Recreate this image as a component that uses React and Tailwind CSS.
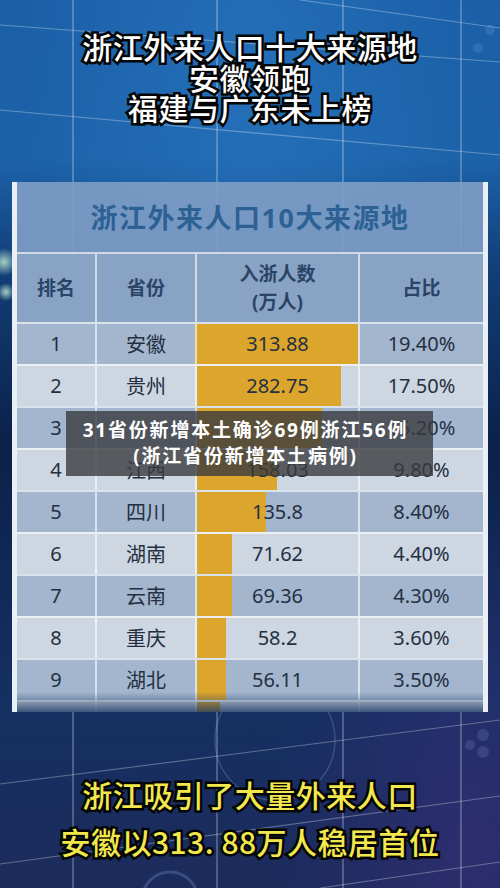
import React from "react";

const rows = [
  { rank: "1", prov: "安徽", num: "313.88", pct: "19.40%", bar: 161 },
  { rank: "2", prov: "贵州", num: "282.75", pct: "17.50%", bar: 144 },
  { rank: "3", prov: "", num: "", pct: "15.20%", bar: 125 },
  { rank: "4", prov: "江西", num: "158.03", pct: "9.80%", bar: 80 },
  { rank: "5", prov: "四川", num: "135.8", pct: "8.40%", bar: 69 },
  { rank: "6", prov: "湖南", num: "71.62", pct: "4.40%", bar: 35 },
  { rank: "7", prov: "云南", num: "69.36", pct: "4.30%", bar: 35 },
  { rank: "8", prov: "重庆", num: "58.2", pct: "3.60%", bar: 29 },
  { rank: "9", prov: "湖北", num: "56.11", pct: "3.50%", bar: 29 },
  { rank: "", prov: "", num: "", pct: "", bar: 23 },
];

const Backdrop = () => (
  <svg
    className="absolute inset-0"
    width="500"
    height="888"
    viewBox="0 0 500 888"
  >
    <defs>
      <linearGradient id="bg" x1="0" y1="0" x2="0" y2="1">
        <stop offset="0" stopColor="#1b5fa7" />
        <stop offset="0.18" stopColor="#1c62a9" />
        <stop offset="0.3" stopColor="#123f78" />
        <stop offset="0.5" stopColor="#0b2149" />
        <stop offset="0.78" stopColor="#143062" />
        <stop offset="1" stopColor="#1c2b5c" />
      </linearGradient>
      <radialGradient id="glow" cx="0.5" cy="0.08" r="0.45">
        <stop offset="0" stopColor="#2b7cc6" stopOpacity="0.55" />
        <stop offset="1" stopColor="#2b7cc6" stopOpacity="0" />
      </radialGradient>
      <radialGradient id="purple" cx="0.95" cy="0.95" r="0.4">
        <stop offset="0" stopColor="#3a2f7a" stopOpacity="0.6" />
        <stop offset="1" stopColor="#3a2f7a" stopOpacity="0" />
      </radialGradient>
      <radialGradient id="bokeh" cx="0.5" cy="0.5" r="0.5">
        <stop offset="0" stopColor="#c9f3d8" stopOpacity="0.8" />
        <stop offset="1" stopColor="#c9f3d8" stopOpacity="0" />
      </radialGradient>
    </defs>
    <rect width="500" height="888" fill="url(#bg)" />
    <rect width="500" height="888" fill="url(#glow)" />
    <rect width="500" height="888" fill="url(#purple)" />
    <circle cx="4" cy="262" r="14" fill="url(#bokeh)" />
    <circle cx="6" cy="292" r="9" fill="url(#bokeh)" />
    <g stroke="#ffffff" strokeOpacity="0.4" strokeWidth="1.2">
      <line x1="73" y1="0" x2="73" y2="888" />
      <line x1="217" y1="0" x2="217" y2="888" />
      <line x1="343" y1="0" x2="343" y2="888" />
      <line x1="461" y1="0" x2="461" y2="888" />
    </g>
    <g stroke="#ffffff" strokeOpacity="0.3" strokeWidth="1.2" fill="none">
      <line x1="0" y1="25" x2="500" y2="62" />
      <line x1="300" y1="0" x2="500" y2="28" />
      <line x1="0" y1="110" x2="500" y2="155" />
      <line x1="0" y1="784" x2="500" y2="720" />
      <line x1="0" y1="864" x2="500" y2="796" />
      <line x1="320" y1="888" x2="500" y2="862" />
    </g>
    <g fill="none" stroke="#8fb3e6" strokeOpacity="0.25">
      <circle cx="170" cy="900" r="28" strokeWidth="3" />
      <circle cx="275" cy="740" r="60" strokeWidth="1.5" />
    </g>
    <g fill="#8fb3e6" fillOpacity="0.18">
      <circle cx="483" cy="735" r="6" />
      <circle cx="483" cy="752" r="6" />
      <circle cx="470" cy="745" r="5" />
      <circle cx="490" cy="30" r="5" />
      <circle cx="478" cy="48" r="5" />
    </g>
  </svg>
);

const strokeWhite =
  "text-white [-webkit-text-stroke:5px_#050505] [paint-order:stroke_fill]";
const strokeYellow =
  "text-[#f2e84c] [-webkit-text-stroke:5px_#050505] [paint-order:stroke_fill]";

export default function App() {
  return (
    <div className="relative w-[500px] h-[888px] overflow-hidden bg-[#15407a] font-['Noto_Sans','Noto_Sans_CJK_SC',sans-serif]">
      <Backdrop />

      <div className="relative flex flex-col items-center">
        <div
          className={`pt-[31px] text-center text-[30px] leading-[30.5px] font-medium tracking-[0.5px] font-['Noto_Sans_CJK_SC',sans-serif] ${strokeWhite}`}
        >
          <div>浙江外来人口十大来源地</div>
          <div>安徽领跑</div>
          <div>福建与广东未上榜</div>
        </div>

        <div className="relative mt-[59.5px] w-[476px] h-[530px] overflow-hidden border-x-[5px] border-white/85 bg-[#7f9fc6]/90">
          <div className="h-[70px] flex items-center justify-center pt-[2px] text-[27px] font-bold tracking-[1.5px] text-[#2d6194] font-['Noto_Sans','Noto_Sans_CJK_SC',sans-serif]">
            浙江外来人口10大来源地
          </div>

          <div className="grid grid-cols-[78px_100px_163px_125px] h-[70px] bg-[#8ba4c4]/90 border-t-2 border-white/60 text-[19px] font-bold text-[#2a4466]">
            <div className="flex items-center justify-center">排名</div>
            <div className="flex items-center justify-center border-l-2 border-white/60">
              省份
            </div>
            <div className="flex flex-col items-center justify-center border-l-2 border-white/60 leading-[28px]">
              <span>入浙人数</span>
              <span>(万人)</span>
            </div>
            <div className="flex items-center justify-center border-l-2 border-white/60">
              占比
            </div>
          </div>

          {rows.map((r, i) => (
            <div
              key={i}
              className={`grid grid-cols-[78px_100px_163px_125px] h-[42px] border-t-2 border-white/60 text-[20px] text-[#243042] ${
                i % 2 === 0 ? "bg-[#a3b6ce]" : "bg-[#cdd6e1]"
              }`}
            >
              <div className="flex items-center justify-center">{r.rank}</div>
              <div className="flex items-center justify-center border-l-2 border-white/60 font-['Noto_Sans_CJK_SC',sans-serif]">
                {r.prov}
              </div>
              <div
                className="flex items-center justify-center border-l-2 border-white/60"
                style={{
                  background: `linear-gradient(to right, #dca52b ${r.bar}px, transparent ${r.bar}px)`,
                }}
              >
                {r.num}
              </div>
              <div className="flex items-center justify-center border-l-2 border-white/60">
                {r.pct}
              </div>
            </div>
          ))}

          <div className="absolute left-0 right-0 bottom-0 h-[20px] bg-gradient-to-b from-transparent to-[#1a3663]/80" />
        </div>

        <div
          className={`mt-[59px] text-center text-[30px] leading-[47px] font-medium tracking-[0.5px] font-['Noto_Sans_CJK_SC',sans-serif] ${strokeYellow}`}
        >
          <div>浙江吸引了大量外来人口</div>
          <div>安徽以313. 88万人稳居首位</div>
        </div>
      </div>

      <div className="absolute left-[66px] top-[411px] w-[367px] h-[65px] bg-[#3a3b3e]/80 pt-[6px] pr-[8px] text-center text-[19px] leading-[26px] font-bold tracking-[1.8px] text-white">
        <div>31省份新增本土确诊69例浙江56例</div>
        <div>(浙江省份新增本土病例)</div>
      </div>
    </div>
  );
}
